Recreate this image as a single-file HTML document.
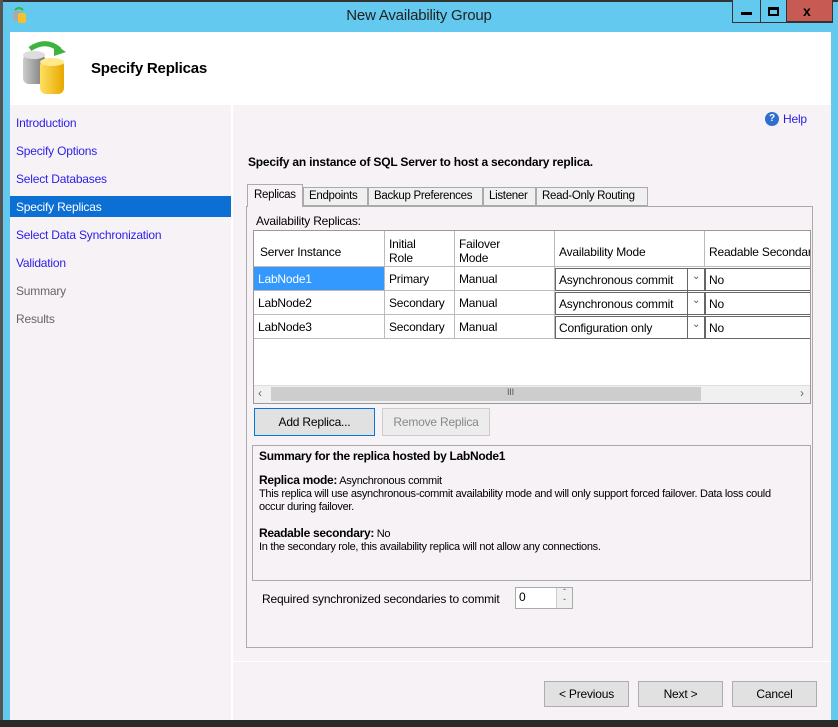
<!DOCTYPE html>
<html><head><style>
*{box-sizing:border-box;margin:0;padding:0}
body{width:838px;height:727px;background:#63c9ef;position:relative;overflow:hidden;font-family:"Liberation Sans",sans-serif;font-size:12px;color:#000;letter-spacing:-0.2px}
.a{position:absolute;white-space:nowrap}
.nav{color:#2a1ee6;font-size:12px}
.btn{position:absolute;border:1px solid #adadad;background:#e1e1e1;text-align:center;font-size:12px;line-height:24px}
.cell{position:absolute;border-right:1px solid #bbb;border-bottom:1px solid #bbb;padding-left:4px;font-size:12px;background:#fff;white-space:nowrap}
.tab{position:absolute;top:187px;height:19px;border:1px solid #aaa;background:#f0f0f0;padding:2px 0 0 5px;white-space:nowrap;font-size:11.5px;letter-spacing:-0.3px}
</style></head><body>
<div class="a" style="left:0;top:0;width:838px;height:2px;background:#333"></div>
<div class="a" style="left:0;top:0;width:3px;height:727px;background:#555"></div>
<div class="a" style="left:0;top:720px;width:838px;height:7px;background:#2a2a2a"></div>
<div class="a" style="left:12px;top:6px;width:16px;height:18px">
<svg width="16" height="18"><rect x="1" y="5" width="7" height="10" rx="2" fill="#aaa"/><rect x="6" y="7" width="8" height="10" rx="2" fill="#f5c22a"/><path d="M3 4 Q7 0 11 4" stroke="#3b3" stroke-width="2" fill="none"/></svg></div>
<div class="a" style="left:0;top:7px;width:838px;text-align:center;font-size:15px;color:#222">New Availability Group</div>
<div class="a" style="left:732px;top:0;width:101px;height:23px;border:1px solid #333;border-top:none;background:#63c9ef"></div>
<div class="a" style="left:760px;top:0;width:1px;height:22px;background:#333"></div>
<div class="a" style="left:786px;top:0;width:47px;height:22px;background:#c75a52;border:1px solid #333;border-top:none"></div>
<div class="a" style="left:741px;top:12px;width:11px;height:3px;background:#000"></div>
<div class="a" style="left:768px;top:7px;width:11px;height:9px;border:2px solid #000;border-top-width:3px"></div>
<div class="a" style="left:803px;top:3px;font-weight:bold;font-size:14px">x</div>
<div class="a" style="left:10px;top:32px;width:821px;height:688px;background:#f6f2f6"></div>
<div class="a" style="left:10px;top:32px;width:821px;height:73px;background:#fff"></div>
<div class="a" style="left:20px;top:40px;width:52px;height:56px">
<svg width="52" height="56"><defs><linearGradient id="g" x1="0" x2="1"><stop offset="0" stop-color="#ccc"/><stop offset="1" stop-color="#777"/></linearGradient><linearGradient id="y" x1="0" x2="1"><stop offset="0" stop-color="#ffe060"/><stop offset="1" stop-color="#e8a800"/></linearGradient></defs>
<rect x="3" y="14" width="22" height="30" rx="6" fill="url(#g)"/><ellipse cx="14" cy="15" rx="11" ry="4" fill="#ddd"/>
<rect x="20" y="20" width="24" height="34" rx="6" fill="url(#y)"/><ellipse cx="32" cy="22" rx="12" ry="4" fill="#ffe98a"/>
<path d="M10 9 Q26 -2 40 10" stroke="#3fb33f" stroke-width="5" fill="none"/><path d="M34 4 L46 12 L34 16Z" fill="#3fb33f"/></svg></div>
<div class="a" style="left:91px;top:60px;font-size:15px;font-weight:bold">Specify Replicas</div>
<div class="a" style="left:231px;top:105px;width:2px;height:615px;background:#fff"></div>
<div class="a nav" style="left:16px;top:116px">Introduction</div>
<div class="a nav" style="left:16px;top:144px">Specify Options</div>
<div class="a nav" style="left:16px;top:172px">Select Databases</div>
<div class="a" style="left:10px;top:196px;width:221px;height:21px;background:#0b6fd4"></div>
<div class="a" style="top:200px;left:16px;color:#fff">Specify Replicas</div>
<div class="a nav" style="top:228px;left:16px">Select Data Synchronization</div>
<div class="a nav" style="top:256px;left:16px">Validation</div>
<div class="a" style="top:284px;left:16px;color:#666">Summary</div>
<div class="a" style="top:312px;left:16px;color:#666">Results</div>
<div class="a" style="left:765px;top:112px;width:14px;height:14px;border-radius:7px;background:#2f6fcf;color:#fff;font-size:10px;font-weight:bold;text-align:center;line-height:14px">?</div>
<div class="a" style="left:783px;top:112px;color:#2a1ee6">Help</div>
<div class="a" style="left:248px;top:155px;font-weight:bold">Specify an instance of SQL Server to host a secondary replica.</div>
<div class="a" style="left:246px;top:206px;width:567px;height:442px;border:1px solid #aaa;background:#f6f2f6"></div>
<div class="a" style="left:247px;top:184px;width:56px;height:23px;border:1px solid #aaa;border-bottom:none;background:#f6f2f6;padding:4px 0 0 6px;font-size:11.5px;letter-spacing:-0.3px">Replicas</div>
<div class="tab" style="left:303px;width:65px">Endpoints</div>
<div class="tab" style="left:368px;width:115px">Backup Preferences</div>
<div class="tab" style="left:483px;width:53px">Listener</div>
<div class="tab" style="left:536px;width:112px">Read-Only Routing</div>
<div class="a" style="left:256px;top:214px">Availability Replicas:</div>
<div class="a" style="left:253px;top:230px;width:558px;height:174px;border:1px solid #999;background:#fff;overflow:hidden">
<div class="cell" style="left:0;top:0;width:131px;height:36px;padding-top:14px;padding-left:6px">Server Instance</div>
<div class="cell" style="left:131px;top:0;width:70px;height:36px;padding-top:6px">Initial<br>Role</div>
<div class="cell" style="left:201px;top:0;width:100px;height:36px;padding-top:6px">Failover<br>Mode</div>
<div class="cell" style="left:301px;top:0;width:150px;height:36px;padding-top:14px">Availability Mode</div>
<div class="cell" style="left:451px;top:0;width:110px;height:36px;padding-top:14px">Readable Secondar</div>
<div class="cell" style="left:0;top:36px;width:131px;height:24px;padding-top:5px;background:#3399ff;color:#fff">LabNode1</div>
<div class="cell" style="left:131px;top:36px;width:70px;height:24px;padding-top:5px">Primary</div>
<div class="cell" style="left:201px;top:36px;width:100px;height:24px;padding-top:5px">Manual</div>
<div class="cell" style="left:0;top:60px;width:131px;height:24px;padding-top:5px">LabNode2</div>
<div class="cell" style="left:131px;top:60px;width:70px;height:24px;padding-top:5px">Secondary</div>
<div class="cell" style="left:201px;top:60px;width:100px;height:24px;padding-top:5px">Manual</div>
<div class="cell" style="left:0;top:84px;width:131px;height:24px;padding-top:5px">LabNode3</div>
<div class="cell" style="left:131px;top:84px;width:70px;height:24px;padding-top:5px">Secondary</div>
<div class="cell" style="left:201px;top:84px;width:100px;height:24px;padding-top:5px">Manual</div>
<div class="a" style="left:301px;top:37px;width:150px;height:23px;border:1px solid #666;padding:4px 0 0 3px">Asynchronous commit</div>
<div class="a" style="left:301px;top:61px;width:150px;height:23px;border:1px solid #666;padding:4px 0 0 3px">Asynchronous commit</div>
<div class="a" style="left:301px;top:85px;width:150px;height:23px;border:1px solid #666;padding:4px 0 0 3px">Configuration only</div>
<div class="a" style="left:433px;top:37px;width:1px;height:71px;background:#666"></div>
<div class="a" style="left:438px;top:40px;font-size:10px;color:#555">&#8964;</div>
<div class="a" style="left:438px;top:64px;font-size:10px;color:#555">&#8964;</div>
<div class="a" style="left:438px;top:88px;font-size:10px;color:#555">&#8964;</div>
<div class="a" style="left:451px;top:37px;width:110px;height:23px;border:1px solid #666;padding:4px 0 0 3px">No</div>
<div class="a" style="left:451px;top:61px;width:110px;height:23px;border:1px solid #666;padding:4px 0 0 3px">No</div>
<div class="a" style="left:451px;top:85px;width:110px;height:23px;border:1px solid #666;padding:4px 0 0 3px">No</div>
<div class="a" style="left:0;top:154px;width:558px;height:18px;background:#f0f0f0;border-top:1px solid #ddd"></div>
<div class="a" style="left:17px;top:156px;width:430px;height:14px;background:#cdcdcd"></div>
<div class="a" style="left:4px;top:155px;color:#666">&lsaquo;</div>
<div class="a" style="left:546px;top:155px;color:#666">&rsaquo;</div>
<div class="a" style="left:253px;top:156px;font-size:9px;color:#555">III</div>
</div>
<div class="btn" style="left:254px;top:408px;width:121px;height:28px;border-color:#0078d7;line-height:26px">Add Replica...</div>
<div class="btn" style="left:382px;top:408px;width:108px;height:28px;background:#ececec;border-color:#ccc;color:#888;line-height:26px">Remove Replica</div>
<div class="a" style="left:252px;top:445px;width:559px;height:136px;border:1px solid #aaa;background:#f6f2f6;padding:4px 24px 4px 6px;font-size:11px;line-height:13px;letter-spacing:-0.3px;white-space:normal">
<div style="font-weight:bold;font-size:12px">Summary for the replica hosted by LabNode1</div>
<div style="margin-top:11px"><b style="font-size:12px">Replica mode:</b> Asynchronous commit</div>
<div>This replica will use asynchronous-commit availability mode and will only support forced failover. Data loss could occur during failover.</div>
<div style="margin-top:13px"><b style="font-size:12px">Readable secondary:</b> No</div>
<div>In the secondary role, this availability replica will not allow any connections.</div>
</div>
<div class="a" style="left:262px;top:592px">Required synchronized secondaries to commit</div>
<div class="a" style="left:515px;top:587px;width:58px;height:22px;border:1px solid #aaa;background:#fff;padding:2px 3px">0</div>
<div class="a" style="left:556px;top:588px;width:16px;height:20px;border-left:1px solid #ccc;background:#f0f0f0;font-size:8px;text-align:center;line-height:10px;color:#444">&#710;<br>&#711;</div>
<div class="a" style="left:233px;top:661px;width:598px;height:1px;background:#fff"></div>
<div class="btn" style="left:544px;top:681px;width:85px;height:26px">&lt; Previous</div>
<div class="btn" style="left:638px;top:681px;width:85px;height:26px">Next &gt;</div>
<div class="btn" style="left:732px;top:681px;width:85px;height:26px">Cancel</div>
</body></html>
